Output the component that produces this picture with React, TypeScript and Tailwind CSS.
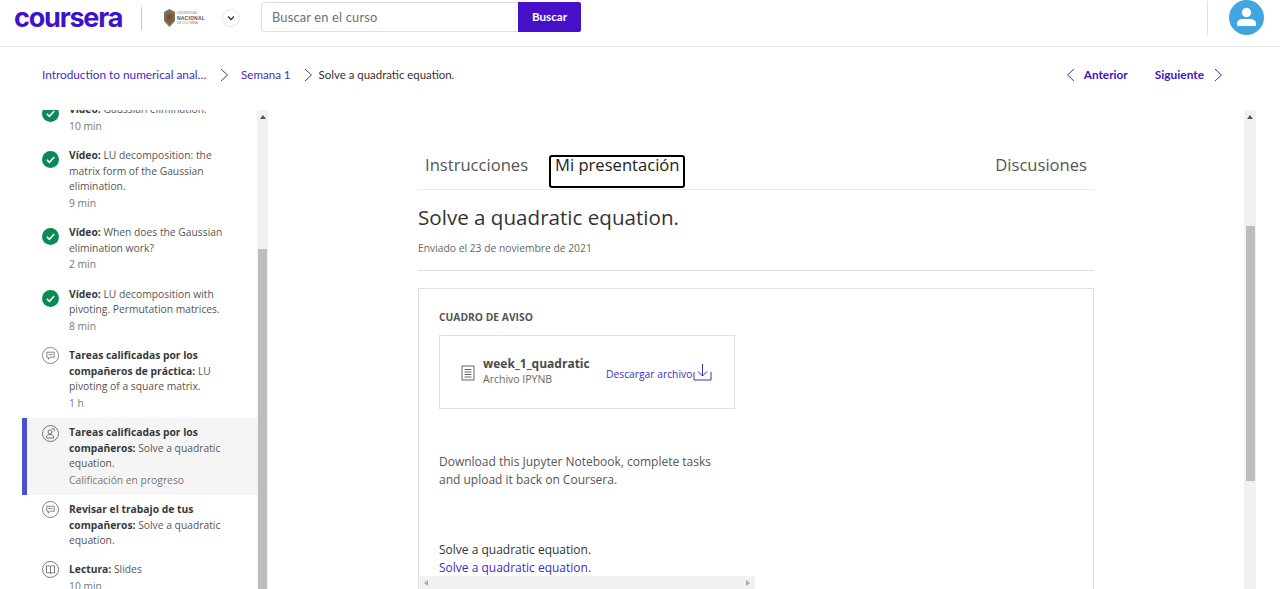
import { ReactNode } from "react";

function CheckIcon() {
  return (
    <svg width="17" height="17" viewBox="0 0 17 17" className="shrink-0 mt-[3px]">
      <circle cx="8.5" cy="8.5" r="8.5" fill="#0b8a56" />
      <path d="M4.8 8.8l2.6 2.5 4.8-5.3" fill="none" stroke="#fff" strokeWidth="1.5" />
    </svg>
  );
}

function ChatIcon() {
  return (
    <svg width="17" height="17" viewBox="0 0 17 17" fill="none" stroke="#666" strokeWidth="0.8" className="shrink-0 mt-[-1px]">
      <circle cx="8.5" cy="8.5" r="8" />
      <path d="M4.8 5.2h7.4v5h-3.9l-2 1.9v-1.9h-1.5z" />
      <path d="M6.5 7.6h4" />
    </svg>
  );
}

function PersonDocIcon() {
  return (
    <svg width="17" height="17" viewBox="0 0 17 17" fill="none" stroke="#555" strokeWidth="0.8" className="shrink-0">
      <circle cx="8.5" cy="8.5" r="8" />
      <circle cx="8" cy="7" r="2" />
      <path d="M4.5 13v-1.4c0-1.2 1.5-2 3.5-2s3.5.8 3.5 2V13zM9.5 3.8h2.7v2.6" />
    </svg>
  );
}

function BookIcon() {
  return (
    <svg width="17" height="17" viewBox="0 0 17 17" fill="none" stroke="#555" strokeWidth="0.8" className="shrink-0 mt-[-1px]">
      <circle cx="8.5" cy="8.5" r="8" />
      <path d="M8.5 5.4c-1-.7-2.500-.8-4-.5v7c1.500-.3 3-.2 4 .5 1-.7 2.500-.8 4-.5v-7c-1.500-.3-3-.2-4 .5zM8.500 5.400v7" />
    </svg>
  );
}

function Chevron({ left, className }: { left?: boolean; className?: string }) {
  return (
    <svg width="9" height="14" viewBox="0 0 9 14" fill="none" stroke="currentColor" strokeWidth="1" className={className}>
      <path d={left ? "M8 1L1.500 7 8 13" : "M1 1l6.500 6L1 13"} />
    </svg>
  );
}

function Crest() {
  return (
    <div className="flex items-center gap-[1px] ml-[21px] w-[45px] shrink-0">
      <svg width="13" height="18" viewBox="0 0 13 18" className="shrink-0">
        <path d="M1 3l5.500-3L12 3v9l-5.500 6L1 12z" fill="#6c7a55" />
        <path d="M3 5h7v6l-3.500 4L3 11z" fill="#9c4a42" />
        <circle cx="6.500" cy="8" r="2" fill="#3e6a45" />
      </svg>
      <div className="flex flex-col items-start text-[#555] leading-[5px] font-['Liberation_Sans',sans-serif]">
        <span className="text-[3px] text-[#888]">UNIVERSIDAD</span>
        <span className="text-[5px] font-bold tracking-[0.2px]">NACIONAL</span>
        <span className="text-[3px] text-[#888]">DE COLOMBIA</span>
      </div>
    </div>
  );
}

function Header() {
  return (
    <header className="h-[47px] shrink-0 border-b border-[#e3e3e3] flex items-start pl-[14px] bg-white">
      <span className="w-[109px] h-[36px] flex items-center font-['Inter',sans-serif] font-bold text-[27px] tracking-[-1.200px] text-[#3f13c8]">
        coursera
      </span>
      <div className="w-[1px] h-[23px] mt-[7px] ml-[18px] bg-[#c8c8c8]" />
      <div className="mt-[9px]">
        <Crest />
      </div>
      <div className="w-[18px] h-[18px] mt-[9px] ml-[14px] rounded-full border border-[#e6e6e6] flex items-center justify-center shrink-0">
        <svg width="8" height="6" viewBox="0 0 8 6" fill="none" stroke="#333" strokeWidth="1.300">
          <path d="M1 1.500l3 3 3-3" />
        </svg>
      </div>
      <div className="flex ml-[21px] mt-[2px] h-[30px] w-[320px] rounded-[2px] overflow-hidden">
        <div className="w-[257px] border border-r-0 border-[#dfdfdf] rounded-l-[3px] pl-[10px] pt-[1px] flex items-center font-['Lato',sans-serif] text-[12.800px] tracking-[0.2px] text-[#6f6f6f]">
          Buscar en el curso
        </div>
        <div className="w-[63px] bg-[#4710c8] text-white text-[11.700px] font-bold font-['Lato',sans-serif] flex items-center justify-center">
          Buscar
        </div>
      </div>
      <div className="flex-1" />
      <div className="w-[1px] h-[34px] mt-[1px] bg-[#dedede]" />
      <svg width="35" height="35" viewBox="0 0 35 35" className="ml-[21px] mr-[16px] shrink-0">
        <circle cx="17.500" cy="17.500" r="17.500" fill="#41a5df" />
        <circle cx="17.500" cy="12.500" r="4.700" fill="#fff" />
        <path d="M8 26v-2.500c0-3 3-4.500 5.500-4.500h8c2.500 0 5.500 1.500 5.500 4.500V26z" fill="#fff" />
      </svg>
    </header>
  );
}

function Breadcrumb() {
  return (
    <div className="h-[63px] shrink-0 flex items-start pt-[20px] pl-[42px] pr-[57px] font-['Lato',sans-serif] text-[11.600px] leading-[16px]">
      <span className="w-[165px] text-[11.800px] text-[#3f2cc4] whitespace-nowrap">Introduction to numerical anal…</span>
      <Chevron className="ml-[13px] mt-[1px] text-[#444]" />
      <span className="ml-[12px] text-[#3f2cc4]">Semana 1</span>
      <Chevron className="ml-[13px] mt-[1px] text-[#444]" />
      <span className="ml-[6px] text-[11.450px] text-[#333]">Solve a quadratic equation.</span>
      <div className="flex-1" />
      <Chevron left className="mt-[1px] text-[#3f2cc4]" />
      <span className="ml-[9px] w-[71px] text-[11.800px] font-bold text-[#4212c4]">Anterior</span>
      <span className="text-[11.900px] font-bold text-[#4212c4]">Siguiente</span>
      <Chevron className="ml-[10px] mt-[1px] text-[#3f2cc4]" />
    </div>
  );
}

function Item({
  icon,
  title,
  text,
  meta,
  active,
}: {
  icon: ReactNode;
  title: string;
  text: string;
  meta?: string;
  active?: boolean;
}) {
  return (
    <div
      className={
        active
          ? "flex border-l-[5px] border-[#4b52cf] bg-[#f5f5f5] pl-[15px] pt-[7px] pb-[6.500px]"
          : "flex border-l-[5px] border-transparent pl-[15px] pt-[7px] pb-[6.500px]"
      }
    >
      <div className="w-[27px] shrink-0">{icon}</div>
      <div className="w-[160px] text-[10.300px] leading-[15.500px] text-[#555]">
        <p>
          <b className="text-[#373a3c]">{title}</b> {text}
        </p>
        {meta && <p className="leading-[17px] text-[#777]">{meta}</p>}
      </div>
    </div>
  );
}

function ScrollTrack({ before, thumb, className }: { before: string; thumb: string; className: string }) {
  return (
    <div className={"shrink-0 bg-[#f1f1f1] flex flex-col items-center " + className}>
      <div className="w-0 h-0 mt-[5px] border-x-[3.500px] border-x-transparent border-b-[4px] border-b-[#555] shrink-0" />
      <div className={before + " shrink-0"} />
      <div className={thumb + " w-[9px] bg-[#bdbdbd] shrink-0"} />
    </div>
  );
}

function Sidebar() {
  return (
    <div className="w-[268px] shrink-0 flex overflow-hidden">
      <div className="w-[257px] pl-[22px] shrink-0 overflow-hidden">
        <div className="mt-[-15px]">
          <Item icon={<CheckIcon />} title="Vídeo:" text="Gaussian elimination." meta="10 min" />
          <Item icon={<CheckIcon />} title="Vídeo:" text="LU decomposition: the matrix form of the Gaussian elimination." meta="9 min" />
          <Item icon={<CheckIcon />} title="Vídeo:" text="When does the Gaussian elimination work?" meta="2 min" />
          <Item icon={<CheckIcon />} title="Vídeo:" text="LU decomposition with pivoting. Permutation matrices." meta="8 min" />
          <Item icon={<ChatIcon />} title="Tareas calificadas por los compañeros de práctica:" text="LU pivoting of a square matrix." meta="1 h" />
          <Item active icon={<PersonDocIcon />} title="Tareas calificadas por los compañeros:" text="Solve a quadratic equation." meta="Calificación en progreso" />
          <Item icon={<ChatIcon />} title="Revisar el trabajo de tus compañeros:" text="Solve a quadratic equation." />
          <Item icon={<BookIcon />} title="Lectura:" text="Slides" meta="10 min" />
        </div>
      </div>
      <ScrollTrack className="w-[11px]" before="h-[130px]" thumb="h-[340px]" />
    </div>
  );
}

function FileBox() {
  return (
    <div className="mt-[11px] w-[296px] h-[74px] border border-[#dedede] flex items-start pl-[21px] text-[#555]">
      <svg width="14" height="16" viewBox="0 0 14 16" fill="none" stroke="#555" strokeWidth="0.900" className="mt-[29px] shrink-0">
        <path d="M1 1h12v14H1zM3.500 4.500h7M3.500 7h7M3.500 9.500h7M3.500 12h7" />
      </svg>
      <div className="ml-[8px] w-[123px] pt-[19px] shrink-0">
        <p className="text-[12px] leading-[17px] font-bold text-[#4a4a4a]">week_1_quadratic</p>
        <p className="text-[10.500px] leading-[14px] text-[#666]">Archivo IPYNB</p>
      </div>
      <span className="mt-[31px] text-[10.300px] leading-[14px] text-[#3f2cc4] whitespace-nowrap">Descargar archivo</span>
      <svg width="19" height="18" viewBox="0 0 19 18" fill="none" stroke="#3f2cc4" strokeWidth="1" className="mt-[27px] ml-[1px] shrink-0">
        <path d="M9.500 1v12M5 8.500l4.500 4.500L14 8.500M1 9v8h17V9" />
      </svg>
    </div>
  );
}

function Main() {
  return (
    <div className="flex-1 min-w-0 flex">
      <div className="flex-1 min-w-0 pl-[150px] overflow-hidden">
        <div className="w-[676px]">
          <div className="h-[80px] border-b border-[#ececec] pt-[43px] flex items-start text-[16.600px] leading-[24px] text-[#555] pl-[7px]">
            <span className="w-[130px]">Instrucciones</span>
            <span className="relative text-[#222]">
              Mi presentación
              <span className="absolute left-[-6px] top-[2px] w-[136px] h-[33px] border-2 border-black rounded-[3px]" />
            </span>
            <span className="ml-auto mr-[7px]">Discusiones</span>
          </div>
          <h1 className="mt-[12px] text-[20.600px] leading-[30px] text-[#333]">Solve a quadratic equation.</h1>
          <p className="mt-[9px] text-[10.300px] leading-[14px] text-[#666]">Enviado el 23 de noviembre de 2021</p>
          <div className="mt-[15px] h-[1px] bg-[#dedede]" />
          <div className="relative mt-[17px] h-[320px] border border-[#e0e0e0] px-[20px] pt-[21px]">
            <h2 className="text-[10.300px] leading-[14px] font-bold text-[#555]">CUADRO DE AVISO</h2>
            <FileBox />
            <p className="mt-[44px] w-[280px] text-[12px] leading-[18px] text-[#555]">
              Download this Jupyter Notebook, complete tasks and upload it back on Coursera.
            </p>
            <p className="mt-[52px] text-[12px] leading-[18px] text-[#333]">Solve a quadratic equation.</p>
            <p className="text-[12px] leading-[18px] text-[#3f2cc4]">Solve a quadratic equation.</p>
            <div className="absolute left-0 top-[287px] w-[336px] h-[13px] bg-[#f1f1f1] flex items-center justify-between px-[5px]">
              <div className="w-0 h-0 border-y-[3px] border-y-transparent border-r-[4px] border-r-[#aaa]" />
              <div className="w-0 h-0 border-y-[3px] border-y-transparent border-l-[4px] border-l-[#aaa]" />
            </div>
          </div>
        </div>
      </div>
      <ScrollTrack className="w-[12px] mr-[24px]" before="h-[107px]" thumb="h-[255px]" />
    </div>
  );
}

export default function App() {
  return (
    <div className="w-[1280px] h-[589px] overflow-hidden bg-white flex flex-col font-['Open_Sans',sans-serif]">
      <Header />
      <Breadcrumb />
      <div className="flex-1 min-h-0 flex">
        <Sidebar />
        <Main />
      </div>
    </div>
  );
}
